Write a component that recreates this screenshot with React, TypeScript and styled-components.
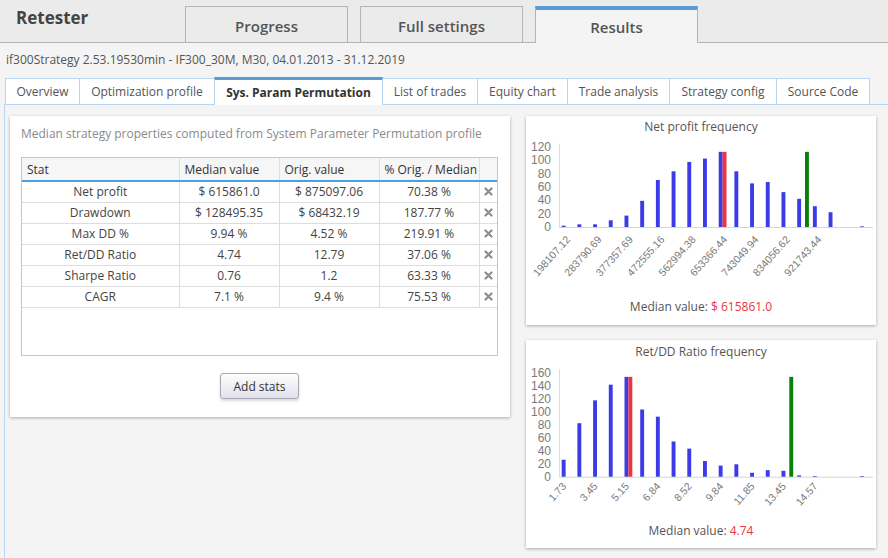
import React from 'react';
import styled, { createGlobalStyle } from 'styled-components';

const GlobalStyle = createGlobalStyle`
  html, body { margin: 0; padding: 0; }
  body {
    background: #f4f4f4;
    font-family: 'Open Sans', 'Liberation Sans', sans-serif;
    color: #444;
    width: 888px;
    height: 558px;
    overflow: hidden;
  }
  * { box-sizing: border-box; }
`;

const Page = styled.div`
  width: 888px;
  height: 558px;
  overflow: hidden;
  background: #f4f4f4;
`;

const Header = styled.header`
  height: 43px;
  background: #ebebeb;
  border-bottom: 1px solid #b4b4b4;
  display: flex;
  padding-left: 16px;
`;

const Brand = styled.div`
  width: 169px;
  font-size: 17px;
  font-weight: 700;
  color: #444;
  line-height: 24px;
  padding-top: 6px;
`;

const TopTabs = styled.nav`
  display: flex;
  gap: 12px;
  align-self: flex-end;
  margin-bottom: -1px;
`;

const TopTab = styled.div<{ $active?: boolean }>`
  width: 163px;
  height: ${(p) => (p.$active ? 37 : 36)}px;
  border: 1px solid #b4b4b4;
  border-bottom: none;
  border-top: ${(p) => (p.$active ? '4px solid #5b9bd5' : '1px solid #b4b4b4')};
  background: ${(p) => (p.$active ? '#f4f4f4' : '#ebebeb')};
  margin-bottom: ${(p) => (p.$active ? 0 : 1)}px;
  color: #555;
  font-size: 15px;
  font-weight: 600;
  display: flex;
  align-items: center;
  justify-content: center;
  padding-top: ${(p) => (p.$active ? 0 : 2)}px;
`;

const Subtitle = styled.div`
  padding: 8px 6px 8px;
  font-size: 12px;
  line-height: 18px;
  color: #555;
`;

const SubTabs = styled.nav`
  display: flex;
  align-items: flex-end;
  height: 28px;
  margin-left: 4px;
  padding-left: 1px;
  border-bottom: 1px solid #b8d6f2;
`;

const SubTab = styled.div<{ $active?: boolean; $w: number }>`
  width: ${(p) => p.$w}px;
  height: ${(p) => (p.$active ? 28 : 26)}px;
  margin-left: -1px;
  margin-bottom: ${(p) => (p.$active ? -1 : 0)}px;
  &:first-child { margin-left: 0; }
  border: 1px solid #b8d6f2;
  border-bottom: none;
  border-top: ${(p) => (p.$active ? '3px solid #5b9bd5' : '1px solid #b8d6f2')};
  background: #fff;
  position: relative;
  z-index: ${(p) => (p.$active ? 1 : 0)};
  font-size: 12px;
  font-weight: ${(p) => (p.$active ? 700 : 400)};
  color: ${(p) => (p.$active ? '#333' : '#555')};
  display: flex;
  align-items: center;
  justify-content: center;
  white-space: nowrap;
`;

const Panel = styled.main`
  margin-left: 4px;
  border-left: 1px solid #b8d6f2;
  padding: 11px 0 0 5px;
  display: flex;
  gap: 16px;
  align-items: flex-start;
  height: 454px;
`;

const Card = styled.section<{ $h: number }>`
  background: #fff;
  box-shadow: 0 1px 3px rgba(0, 0, 0, 0.3);
  height: ${(p) => p.$h}px;
`;

const StatsCard = styled(Card)`
  width: 500px;
  padding: 9px 12px 0 11px;
  display: flex;
  flex-direction: column;
  align-items: center;
`;

const CardTitle = styled.div`
  align-self: stretch;
  font-size: 12px;
  line-height: 18px;
  color: #8a8a8a;
  white-space: nowrap;
`;

const TableBox = styled.div`
  align-self: stretch;
  margin-top: 14px;
  height: 199px;
  border: 1px solid #c6c6c6;
  background: #fff;
`;

const Table = styled.table`
  width: 100%;
  border-collapse: collapse;
  table-layout: fixed;
  font-size: 12px;
`;

const Th = styled.th<{ $w?: number }>`
  ${(p) => (p.$w ? `width: ${p.$w}px;` : '')}
  height: 23px;
  padding: 0 0 0 5px;
  text-align: left;
  font-weight: 400;
  color: #333;
  white-space: nowrap;
  overflow: visible;
  background: #f6f6f6;
  border-right: 1px solid #ddd;
  border-bottom: 2px solid #4a9fe0;
  &:last-child { border-right: none; }
`;

const Td = styled.td`
  height: 21px;
  padding: 0;
  text-align: center;
  color: #444;
  white-space: nowrap;
  border-right: 1px solid #ddd;
  border-bottom: 1px solid #ddd;
  &:last-child { border-right: none; }
`;

const RemoveCell = styled(Td)`
  line-height: 0;
`;

const AddButton = styled.button`
  margin-top: 17px;
  width: 79px;
  height: 26px;
  border: 1px solid #a8a8b6;
  border-radius: 3px;
  background: linear-gradient(#fdfdfd, #e1e1eb);
  box-shadow: 0 2px 3px rgba(0, 0, 0, 0.15);
  font-family: 'Open Sans', 'Liberation Sans', sans-serif;
  font-size: 12px;
  color: #333;
  padding: 0;
`;

const RightColumn = styled.div`
  width: 350px;
  display: flex;
  flex-direction: column;
  gap: 15px;
`;

const ChartCard = styled(Card)`
  width: 350px;
  display: flex;
  flex-direction: column;
  align-items: center;
`;

const ChartTitle = styled.div<{ $top: number }>`
  margin-top: ${(p) => p.$top}px;
  height: 20px;
  font-size: 12px;
  line-height: 16px;
  color: #555;
`;

const Plot = styled.svg`
  display: block;
  font-family: 'Liberation Sans', Arial, sans-serif;
`;

const Median = styled.div<{ $top: number }>`
  margin-top: ${(p) => p.$top}px;
  font-size: 12px;
  line-height: 18px;
  color: #555;
`;

const MedianValue = styled.span`
  color: #ee3340;
`;

const RemoveIcon = () => (
  <svg width="9" height="9" viewBox="0 0 9 9">
    <path d="M1.5 1.5 L7.5 7.5 M7.5 1.5 L1.5 7.5" stroke="#8c8c8c" strokeWidth="2.2" strokeLinecap="round" />
  </svg>
);

const stats = [
  ['Net profit', '$ 615861.0', '$ 875097.06', '70.38 %'],
  ['Drawdown', '$ 128495.35', '$ 68432.19', '187.77 %'],
  ['Max DD %', '9.94 %', '4.52 %', '219.91 %'],
  ['Ret/DD Ratio', '4.74', '12.79', '37.06 %'],
  ['Sharpe Ratio', '0.76', '1.2', '63.33 %'],
  ['CAGR', '7.1 %', '9.4 %', '75.53 %'],
];

const subTabs = [
  { label: 'Overview', w: 75 },
  { label: 'Optimization profile', w: 136 },
  { label: 'Sys. Param Permutation', w: 169, active: true },
  { label: 'List of trades', w: 96 },
  { label: 'Equity chart', w: 91 },
  { label: 'Trade analysis', w: 103 },
  { label: 'Strategy config', w: 108 },
  { label: 'Source Code', w: 94 },
];

type ChartProps = {
  title: string;
  median: string;
  height: number;
  titleTop: number;
  medianTop: number;
  data: number[];
  redIdx: number;
  greenIdx: number;
  max: number;
  ppu: number;
  baseline: number;
  labelDx: number;
  labelDy: number;
  labels: [number, string][];
};

const AXIS_X = 33;
const CAT_W = 15.7;
const BAR_W = 3.9;
const OFF = 2.7;

const FrequencyChart: React.FC<ChartProps> = ({
  title,
  median,
  height,
  titleTop,
  medianTop,
  data,
  redIdx,
  greenIdx,
  max,
  ppu,
  baseline,
  labelDx,
  labelDy,
  labels,
}) => {
  const ticks: number[] = [];
  for (let v = 0; v <= max; v += 20) ticks.push(v);
  const peak = Math.max(...data);
  return (
    <ChartCard $h={height}>
      <ChartTitle $top={titleTop}>{title}</ChartTitle>
      <Plot width={350} height={154} viewBox="0 0 350 154">
        <line x1={AXIS_X + 0.5} y1={baseline - max * ppu - 3} x2={AXIS_X + 0.5} y2={baseline} stroke="#ddd" strokeWidth={1} />
        <line x1={AXIS_X} y1={baseline + 0.5} x2={347} y2={baseline + 0.5} stroke="#d6d6d6" strokeWidth={1} />
        {ticks.map((t) => (
          <text key={t} x={25} y={baseline - t * ppu} dy="0.36em" textAnchor="end" fontSize={12} fill="#7a7a7a">
            {t}
          </text>
        ))}
        {data.map((v, i) => {
          const x = AXIS_X + i * CAT_W + OFF;
          const h = v * ppu;
          return v > 0 ? <rect key={i} x={x} y={baseline - h} width={BAR_W} height={h} fill="#3b3be8" /> : null;
        })}
        <rect x={AXIS_X + redIdx * CAT_W + OFF + BAR_W} y={baseline - peak * ppu} width={BAR_W} height={peak * ppu} fill="#ef3340" />
        <rect x={AXIS_X + greenIdx * CAT_W + OFF + BAR_W * 2} y={baseline - peak * ppu} width={BAR_W} height={peak * ppu} fill="#0a800a" />
        {labels.map(([i, l]) => {
          const cx = AXIS_X + i * CAT_W + CAT_W / 2 + labelDx;
          const cy = baseline + labelDy;
          return (
            <text key={l} x={cx} y={cy} textAnchor="end" fontSize={10.5} fill="#7a7a7a" transform={`rotate(-48 ${cx} ${cy})`}>
              {l}
            </text>
          );
        })}
      </Plot>
      <Median $top={medianTop}>
        Median value: <MedianValue>{median}</MedianValue>
      </Median>
    </ChartCard>
  );
};

const netData = [2, 4, 4, 10, 17, 39, 70, 83, 97, 102, 112, 83, 65, 67, 52, 42, 31, 22, 0, 1];
const retData = [26, 82, 117, 141, 153, 103, 92, 54, 43, 24, 17, 19, 6, 10, 9, 2, 1, 0, 0, 1];

export default function App() {
  return (
    <Page>
      <GlobalStyle />
      <Header>
        <Brand>Retester</Brand>
        <TopTabs>
          <TopTab>Progress</TopTab>
          <TopTab>Full settings</TopTab>
          <TopTab $active>Results</TopTab>
        </TopTabs>
      </Header>
      <Subtitle>if300Strategy 2.53.19530min - IF300_30M, M30, 04.01.2013 - 31.12.2019</Subtitle>
      <SubTabs>
        {subTabs.map((t) => (
          <SubTab key={t.label} $w={t.w} $active={t.active}>
            {t.label}
          </SubTab>
        ))}
      </SubTabs>
      <Panel>
        <StatsCard $h={301}>
          <CardTitle>Median strategy properties computed from System Parameter Permutation profile</CardTitle>
          <TableBox>
            <Table>
              <thead>
                <tr>
                  <Th $w={157}>Stat</Th>
                  <Th $w={100}>Median value</Th>
                  <Th $w={100}>Orig. value</Th>
                  <Th $w={100}>% Orig. / Median</Th>
                  <Th />
                </tr>
              </thead>
              <tbody>
                {stats.map((r) => (
                  <tr key={r[0]}>
                    <Td>{r[0]}</Td>
                    <Td>{r[1]}</Td>
                    <Td>{r[2]}</Td>
                    <Td>{r[3]}</Td>
                    <RemoveCell>
                      <RemoveIcon />
                    </RemoveCell>
                  </tr>
                ))}
              </tbody>
            </Table>
          </TableBox>
          <AddButton>Add stats</AddButton>
        </StatsCard>
        <RightColumn>
          <FrequencyChart
            title="Net profit frequency"
            median="$ 615861.0"
            height={209}
            titleTop={3}
            medianTop={5}
            data={netData}
            redIdx={10}
            greenIdx={15}
            max={120}
            ppu={0.671}
            baseline={88}
            labelDx={4}
            labelDy={13}
            labels={[
              [0, '198107.12'],
              [2, '283790.69'],
              [4, '377357.69'],
              [6, '472555.16'],
              [8, '562994.38'],
              [10, '653366.44'],
              [12, '743049.94'],
              [14, '834056.62'],
              [16, '921743.44'],
            ]}
          />
          <FrequencyChart
            title="Ret/DD Ratio frequency"
            median="4.74"
            height={208}
            titleTop={4}
            medianTop={4}
            data={retData}
            redIdx={4}
            greenIdx={14}
            max={160}
            ppu={0.6525}
            baseline={112.7}
            labelDx={0}
            labelDy={10}
            labels={[
              [0, '1.73'],
              [2, '3.45'],
              [4, '5.15'],
              [6, '6.84'],
              [8, '8.52'],
              [10, '9.84'],
              [12, '11.85'],
              [14, '13.45'],
              [16, '14.57'],
            ]}
          />
        </RightColumn>
      </Panel>
    </Page>
  );
}
